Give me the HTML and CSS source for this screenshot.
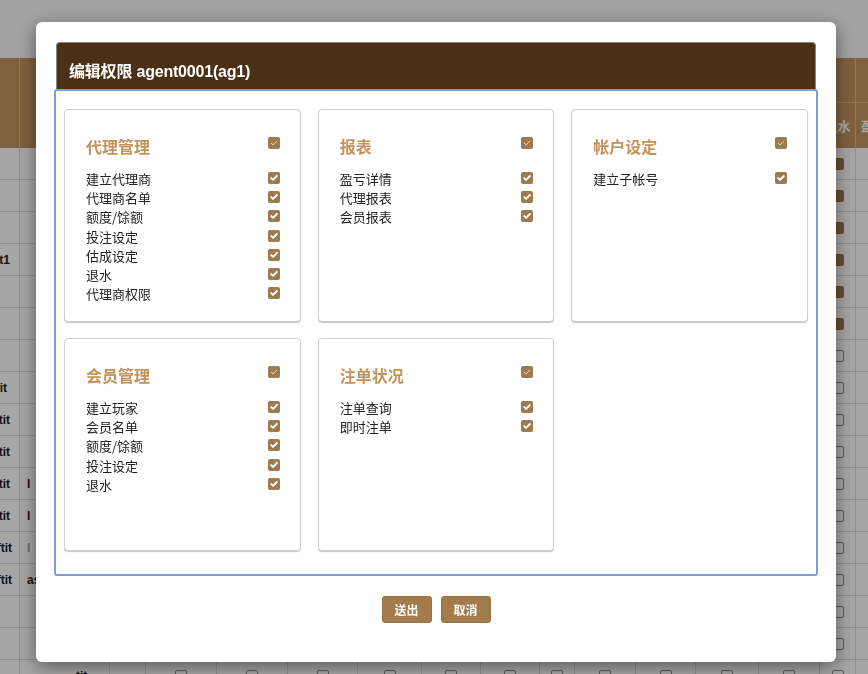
FILE: index.html
```html
<!DOCTYPE html>
<html lang="zh-CN">
<head>
<meta charset="utf-8">
<title>编辑权限</title>
<link rel="stylesheet" href="styles.css">
</head>
<body>
<div class="page">
  <div class="topbar"></div>
  <div class="table">
    <div class="hrow hrow1"><i class="c1"></i><i class="c2"></i><i class="hmid"></i><i class="hlast"></i></div>
    <div class="hrow hrow2"><i class="c1"></i><i class="hmid2"></i><i class="hchk">退水</i><i class="hlast">盈亏</i></div>
    <div class="row"><i class="c1"></i><i class="c2"></i><i class="mid"></i><i class="chk"><b class="bcb on"></b></i><i></i></div>
    <div class="row"><i class="c1"></i><i class="c2"></i><i class="mid"></i><i class="chk"><b class="bcb on"></b></i><i></i></div>
    <div class="row"><i class="c1"></i><i class="c2"></i><i class="mid"></i><i class="chk"><b class="bcb on"></b></i><i></i></div>
    <div class="row"><i class="c1">agent1</i><i class="c2"></i><i class="mid"></i><i class="chk"><b class="bcb on"></b></i><i></i></div>
    <div class="row"><i class="c1"></i><i class="c2"></i><i class="mid"></i><i class="chk"><b class="bcb on"></b></i><i></i></div>
    <div class="row"><i class="c1"></i><i class="c2"></i><i class="mid"></i><i class="chk"><b class="bcb on"></b></i><i></i></div>
    <div class="row"><i class="c1"></i><i class="c2"></i><i class="mid"></i><i class="chk"><b class="bcb"></b></i><i></i></div>
    <div class="row"><i class="c1 e7">testit</i><i class="c2"></i><i class="mid"></i><i class="chk"><b class="bcb"></b></i><i></i></div>
    <div class="row"><i class="c1">testtit</i><i class="c2"></i><i class="mid"></i><i class="chk"><b class="bcb"></b></i><i></i></div>
    <div class="row"><i class="c1">testtit</i><i class="c2"></i><i class="mid"></i><i class="chk"><b class="bcb"></b></i><i></i></div>
    <div class="row"><i class="c1">testtit</i><i class="c2">l</i><i class="mid"></i><i class="chk"><b class="bcb"></b></i><i></i></div>
    <div class="row"><i class="c1">testtit</i><i class="c2">l</i><i class="mid"></i><i class="chk"><b class="bcb"></b></i><i></i></div>
    <div class="row"><i class="c1 e13">testftit</i><i class="c2 muted">l</i><i class="mid"></i><i class="chk"><b class="bcb"></b></i><i></i></div>
    <div class="row"><i class="c1 e13">testftit</i><i class="c2">as</i><i class="mid"></i><i class="chk"><b class="bcb"></b></i><i></i></div>
    <div class="row"><i class="c1"></i><i class="c2"></i><i class="mid"></i><i class="chk"><b class="bcb"></b></i><i></i></div>
    <div class="row"><i class="c1"></i><i class="c2"></i><i class="mid"></i><i class="chk"><b class="bcb"></b></i><i></i></div>
    <div class="row full"><i class="c1"></i><i class="c2 c2r">tit</i><i></i><i class="chk"><b class="bcb"></b></i><i class="chk"><b class="bcb"></b></i><i class="chk"><b class="bcb"></b></i><i class="chk"><b class="bcb"></b></i><i class="chk"><b class="bcb"></b></i><i class="chk"><b class="bcb"></b></i><i class="chk"><b class="bcb"></b></i><i class="chk"><b class="bcb"></b></i><i class="chk"><b class="bcb"></b></i><i class="chk"><b class="bcb"></b></i><i class="chk"><b class="bcb"></b></i><i class="chk"><b class="bcb"></b></i><i></i></div>
  </div>
</div>

<div class="backdrop"></div>

<div class="modal">
  <div class="modal-header">
    <h4 class="modal-title">编辑权限 agent0001(ag1)</h4>
  </div>
  <div class="modal-body">
    <div class="cards">
      <section class="card">
        <div class="card-title"><span>代理管理</span><span class="cb cb-head"><svg viewBox="0 0 12 12"><path d="M3.3 6.2 5.1 7.9 8.8 4.1"/></svg></span></div>
        <ul class="items">
          <li><span>建立代理商</span><span class="cb"><svg viewBox="0 0 12 12"><path d="M3.2 6.1 5.1 7.9 8.9 4"/></svg></span></li>
          <li><span>代理商名单</span><span class="cb"><svg viewBox="0 0 12 12"><path d="M3.2 6.1 5.1 7.9 8.9 4"/></svg></span></li>
          <li><span>额度/馀额</span><span class="cb"><svg viewBox="0 0 12 12"><path d="M3.2 6.1 5.1 7.9 8.9 4"/></svg></span></li>
          <li><span>投注设定</span><span class="cb"><svg viewBox="0 0 12 12"><path d="M3.2 6.1 5.1 7.9 8.9 4"/></svg></span></li>
          <li><span>估成设定</span><span class="cb"><svg viewBox="0 0 12 12"><path d="M3.2 6.1 5.1 7.9 8.9 4"/></svg></span></li>
          <li><span>退水</span><span class="cb"><svg viewBox="0 0 12 12"><path d="M3.2 6.1 5.1 7.9 8.9 4"/></svg></span></li>
          <li><span>代理商权限</span><span class="cb"><svg viewBox="0 0 12 12"><path d="M3.2 6.1 5.1 7.9 8.9 4"/></svg></span></li>
        </ul>
      </section>
      <section class="card">
        <div class="card-title"><span>报表</span><span class="cb cb-head"><svg viewBox="0 0 12 12"><path d="M3.3 6.2 5.1 7.9 8.8 4.1"/></svg></span></div>
        <ul class="items">
          <li><span>盈亏详情</span><span class="cb"><svg viewBox="0 0 12 12"><path d="M3.2 6.1 5.1 7.9 8.9 4"/></svg></span></li>
          <li><span>代理报表</span><span class="cb"><svg viewBox="0 0 12 12"><path d="M3.2 6.1 5.1 7.9 8.9 4"/></svg></span></li>
          <li><span>会员报表</span><span class="cb"><svg viewBox="0 0 12 12"><path d="M3.2 6.1 5.1 7.9 8.9 4"/></svg></span></li>
        </ul>
      </section>
      <section class="card">
        <div class="card-title"><span>帐户设定</span><span class="cb cb-head"><svg viewBox="0 0 12 12"><path d="M3.3 6.2 5.1 7.9 8.8 4.1"/></svg></span></div>
        <ul class="items">
          <li><span>建立子帐号</span><span class="cb"><svg viewBox="0 0 12 12"><path d="M3.2 6.1 5.1 7.9 8.9 4"/></svg></span></li>
        </ul>
      </section>
      <section class="card">
        <div class="card-title"><span>会员管理</span><span class="cb cb-head"><svg viewBox="0 0 12 12"><path d="M3.3 6.2 5.1 7.9 8.8 4.1"/></svg></span></div>
        <ul class="items">
          <li><span>建立玩家</span><span class="cb"><svg viewBox="0 0 12 12"><path d="M3.2 6.1 5.1 7.9 8.9 4"/></svg></span></li>
          <li><span>会员名单</span><span class="cb"><svg viewBox="0 0 12 12"><path d="M3.2 6.1 5.1 7.9 8.9 4"/></svg></span></li>
          <li><span>额度/馀额</span><span class="cb"><svg viewBox="0 0 12 12"><path d="M3.2 6.1 5.1 7.9 8.9 4"/></svg></span></li>
          <li><span>投注设定</span><span class="cb"><svg viewBox="0 0 12 12"><path d="M3.2 6.1 5.1 7.9 8.9 4"/></svg></span></li>
          <li><span>退水</span><span class="cb"><svg viewBox="0 0 12 12"><path d="M3.2 6.1 5.1 7.9 8.9 4"/></svg></span></li>
        </ul>
      </section>
      <section class="card">
        <div class="card-title"><span>注单状况</span><span class="cb cb-head"><svg viewBox="0 0 12 12"><path d="M3.3 6.2 5.1 7.9 8.8 4.1"/></svg></span></div>
        <ul class="items">
          <li><span>注单查询</span><span class="cb"><svg viewBox="0 0 12 12"><path d="M3.2 6.1 5.1 7.9 8.9 4"/></svg></span></li>
          <li><span>即时注单</span><span class="cb"><svg viewBox="0 0 12 12"><path d="M3.2 6.1 5.1 7.9 8.9 4"/></svg></span></li>
        </ul>
      </section>
    </div>
  </div>
  <div class="modal-footer">
    <button class="btn" type="button">送出</button>
    <button class="btn" type="button">取消</button>
  </div>
</div>
</body>
</html>
```

FILE: styles.css
```css
* { box-sizing: border-box; }

html, body {
  margin: 0;
  padding: 0;
}

body {
  width: 868px;
  height: 674px;
  overflow: hidden;
  background: #ffffff;
  font-family: "Liberation Sans", "Noto Sans CJK SC", sans-serif;
  color: #222;
}

/* ---------- background page (table) ---------- */
.page {
  width: 868px;
}

.topbar {
  height: 58px;
  background: #f9f9f9;
}

.table {
  --cols: 20px 90px 36px 71px 71px 70px 64px 59px 59px 35px 61px 60px 63px 61px 36px 40px;
}

.table i {
  font-style: normal;
  display: flex;
  align-items: center;
  white-space: nowrap;
  overflow: hidden;
  border-right: 1px solid #dcdcdc;
  min-width: 0;
}

.hrow {
  display: grid;
  grid-template-columns: var(--cols);
  height: 45px;
  background: #c3955f;
  color: #fff;
  font-size: 13px;
  font-weight: bold;
}

.hrow i {
  border-right-color: #ddb98c;
}

.hrow1 .c2 { border-right: none; }
.hrow1 .hmid { grid-column: 3 / 16; border-bottom: 1px solid #ddb98c; }
.hrow1 .hlast { border-bottom: 1px solid #ddb98c; }
.hrow2 .hmid2 { grid-column: 2 / 15; }
.hrow2 .hchk { justify-content: center; }
.hrow2 .hlast { padding-left: 5px; }

.row {
  display: grid;
  grid-template-columns: var(--cols);
  height: 32px;
  border-bottom: 1px solid #dcdcdc;
  background: #ffffff;
  font-size: 12px;
  font-weight: bold;
  color: #1a1a1a;
}

.row .mid { grid-column: 3 / 15; }

.row .c1 {
  justify-content: flex-end;
  padding-right: 9px;
}

.row .c1.e7 { padding-right: 12px; }
.row .c1.e13 { padding-right: 7px; }

.row .c2 {
  padding-left: 7px;
}

.row .c2r {
  padding-left: 56px;
}

.row .muted { color: #999; }

.row .chk { justify-content: center; }

.bcb {
  display: block;
  width: 12px;
  height: 12px;
  border: 1px solid #8a8a8a;
  border-radius: 2px;
  background: #fff;
}

.bcb.on {
  border-color: #9c7b4f;
  background: #9c7b4f;
}

/* ---------- backdrop + modal ---------- */
.backdrop {
  position: fixed;
  inset: 0;
  background: rgba(0, 0, 0, 0.35);
}

.modal {
  position: absolute;
  left: 36px;
  top: 22px;
  width: 800px;
  height: 640px;
  padding: 20px 20px 39px;
  background: #fff;
  border-radius: 6px;
  box-shadow: 0 5px 18px rgba(0, 0, 0, 0.45);
  display: flex;
  flex-direction: column;
}

.modal-header {
  height: 49px;
  background: #4a3115;
  border: 1px solid #8c8377;
  border-bottom: none;
  border-radius: 4px 4px 0 0;
  display: flex;
  align-items: center;
  padding: 5px 12px 0;
}

.modal-title {
  margin: 0;
  color: #fff;
  font-size: 16px;
  font-weight: bold;
  font-family: "Liberation Sans", "Noto Sans CJK SC", sans-serif;
  letter-spacing: -0.2px;
}

.modal-body {
  height: 483px;
  outline: 2px solid #779ee2;
  outline-offset: 0;
  border-radius: 1px;
  padding: 18px 8px;
}

.cards {
  display: grid;
  grid-template-columns: repeat(3, 1fr);
  grid-auto-rows: 213px;
  column-gap: 17px;
  row-gap: 16px;
}

.card {
  border: 1px solid #cfcfcf;
  border-radius: 4px;
  box-shadow: 0 1px 1px rgba(0, 0, 0, 0.22);
  padding: 25px 20px 0 21px;
  background: #fff;
}

.card-title {
  display: flex;
  justify-content: space-between;
  align-items: flex-start;
  height: 22px;
  line-height: 22px;
  font-size: 16px;
  font-weight: bold;
  color: #c3935b;
  font-family: "Noto Sans CJK SC", sans-serif;
}

.card-title .cb {
  margin-top: 2px;
}

.items {
  list-style: none;
  margin: 12px 0 0;
  padding: 0;
}

.items li {
  display: flex;
  justify-content: space-between;
  align-items: center;
  height: 19.2px;
  font-size: 13px;
  color: #222;
  font-family: "Noto Sans CJK SC", sans-serif;
}

.items li .cb {
  margin-top: -1px;
}

.cb {
  display: block;
  width: 12px;
  height: 12px;
  border-radius: 2px;
  background: #9c7b4f;
  flex: none;
}

.cb svg {
  display: block;
  width: 12px;
  height: 12px;
}

.cb path {
  fill: none;
  stroke: #fff;
  stroke-width: 1.9;
  stroke-linecap: round;
  stroke-linejoin: round;
}

.cb-head path {
  stroke: rgba(255, 255, 255, 0.7);
  stroke-width: 1;
}

.modal-footer {
  margin-top: 22px;
  display: flex;
  justify-content: center;
  gap: 9px;
}

.btn {
  width: 50px;
  height: 27px;
  padding: 0;
  border: 1px solid #957043;
  border-radius: 3px;
  background: #a27c4c;
  color: #fff;
  font-size: 12px;
  font-weight: bold;
  font-family: "Noto Sans CJK SC", sans-serif;
  cursor: pointer;
}
```
